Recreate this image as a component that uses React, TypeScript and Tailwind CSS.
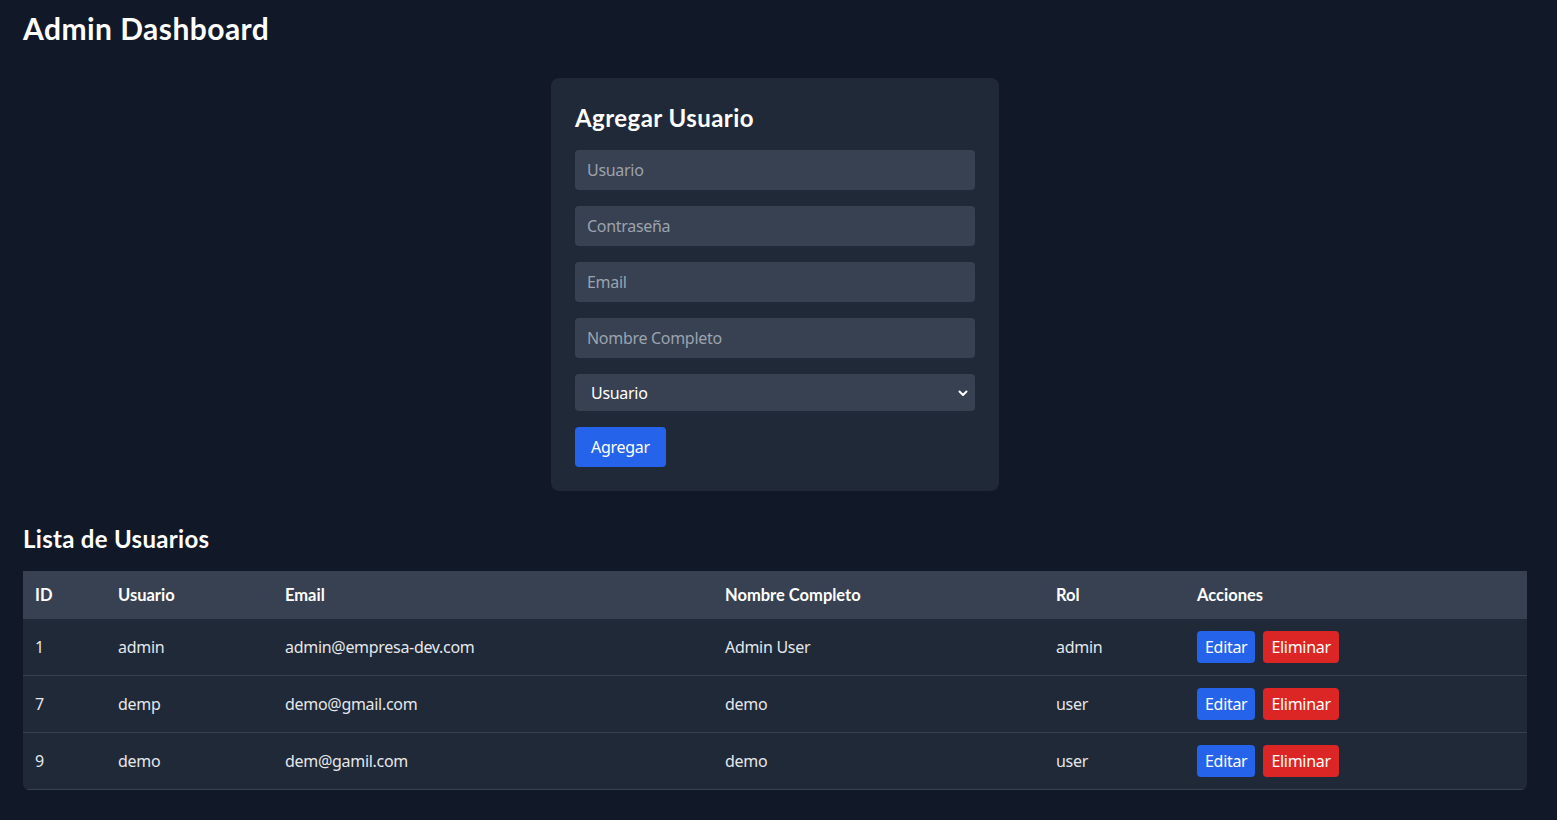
import { useState } from "react";

interface User {
  id: number;
  username: string;
  email: string;
  fullName: string;
  role: string;
}

const users: User[] = [
  { id: 1, username: "admin", email: "admin@empresa-dev.com", fullName: "Admin User", role: "admin" },
  { id: 7, username: "demp", email: "demo@gmail.com", fullName: "demo", role: "user" },
  { id: 9, username: "demo", email: "dem@gamil.com", fullName: "demo", role: "user" },
];

const inputClass =
  "w-full h-10 px-3 rounded bg-[#374151] text-white placeholder-[#9ca3af] outline-none tracking-[-0.3px]";

export default function App() {
  const [role, setRole] = useState("user");

  return (
    <div
      className="min-h-screen bg-[#111827] text-white pt-[10px] pl-[23px] pr-[30px] pb-6 tracking-[-0.3px]"
      style={{ fontFamily: '"Noto Sans", "Open Sans", sans-serif' }}
    >
      <h1 className="text-[30px] leading-9 font-bold mb-8 font-['Lato',sans-serif] tracking-[0.45px]">
        Admin Dashboard
      </h1>

      <div className="mx-auto w-[448px] bg-[#1f2937] rounded-lg p-6">
        <h2 className="text-2xl font-bold mb-4 font-['Lato',sans-serif] tracking-[0.45px]">Agregar Usuario</h2>
        <div className="flex flex-col gap-4">
          <input className={inputClass} placeholder="Usuario" />
          <input className={inputClass} placeholder="Contraseña" type="password" />
          <input className={inputClass} placeholder="Email" />
          <input className={inputClass} placeholder="Nombre Completo" />
          <div className="relative">
            <select
              value={role}
              onChange={(e) => setRole(e.target.value)}
              className="w-full h-[37px] pl-4 pr-8 rounded bg-[#374151] text-white appearance-none outline-none tracking-[-0.3px]"
            >
              <option value="user">Usuario</option>
              <option value="admin">Administrador</option>
            </select>
            <svg
              className="absolute right-[6px] top-1/2 -translate-y-1/2 pointer-events-none"
              width="12"
              height="12"
              viewBox="0 0 12 12"
              fill="none"
            >
              <path d="M2.5 4.5 6 8l3.5-3.5" stroke="white" strokeWidth="2" strokeLinecap="round" strokeLinejoin="round" />
            </svg>
          </div>
          <div>
            <button className="h-10 px-4 rounded bg-[#2563eb] text-white tracking-[-0.3px]">Agregar</button>
          </div>
        </div>
      </div>

      <h2 className="text-2xl font-bold mt-8 mb-4 font-['Lato',sans-serif] tracking-[0.3px]">Lista de Usuarios</h2>
      <div className="rounded-b-md overflow-hidden">
        <table className="w-full table-fixed bg-[#1f2937] text-left border-collapse">
          <colgroup>
            <col className="w-[83px]" />
            <col className="w-[167px]" />
            <col className="w-[440px]" />
            <col className="w-[331px]" />
            <col className="w-[141px]" />
            <col />
          </colgroup>
          <thead className="bg-[#374151] font-['Lato',sans-serif] text-[16.5px] tracking-normal">
            <tr>
              <th className="px-3 py-3 font-bold leading-6">ID</th>
              <th className="px-3 py-3 font-bold leading-6">Usuario</th>
              <th className="px-3 py-3 font-bold leading-6">Email</th>
              <th className="px-3 py-3 font-bold leading-6">Nombre Completo</th>
              <th className="px-3 py-3 font-bold leading-6">Rol</th>
              <th className="px-3 py-3 font-bold leading-6">Acciones</th>
            </tr>
          </thead>
          <tbody className="text-[#e5e7eb]">
            {users.map((u) => (
              <tr key={u.id} className="border-b border-[#374151]">
                <td className="px-3 py-3">{u.id}</td>
                <td className="px-3 py-3">{u.username}</td>
                <td className="px-3 py-3">{u.email}</td>
                <td className="px-3 py-3">{u.fullName}</td>
                <td className="px-3 py-3">{u.role}</td>
                <td className="px-3 py-3">
                  <div className="flex gap-2">
                    <button className="h-8 px-2 rounded bg-[#2563eb] text-white tracking-[-0.3px]">Editar</button>
                    <button className="h-8 px-2 rounded bg-[#dc2626] text-white tracking-[-0.3px]">Eliminar</button>
                  </div>
                </td>
              </tr>
            ))}
          </tbody>
        </table>
      </div>
    </div>
  );
}
